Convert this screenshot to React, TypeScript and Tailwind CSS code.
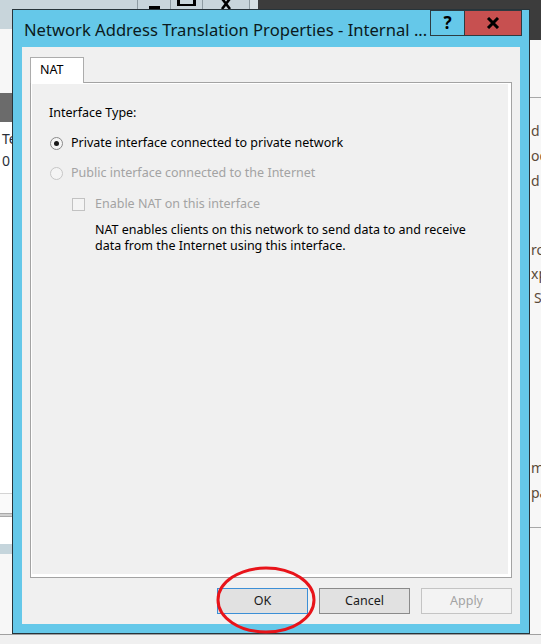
import React from "react";

const ui = { fontFamily: '"Noto Sans", "Open Sans", sans-serif' };

const Radio = ({ checked, disabled }: { checked?: boolean; disabled?: boolean }) => (
  <div
    className={`w-[13px] h-[13px] rounded-full border flex items-center justify-center ${
      disabled ? "border-[#c6c6c6] bg-[#f4f4f4]" : "border-[#8a8a8a] bg-[#f5f5f5]"
    }`}
  >
    {checked && <div className="w-[5px] h-[5px] rounded-full bg-[#1a1a1a]" />}
  </div>
);

const Background = () => (
  <div className="flex flex-col w-[541px] h-[644px] overflow-hidden">
    <div className="flex flex-1">
      {/* left app window */}
      <div className="w-[258px] shrink-0 flex flex-col">
        <div className="h-[29px] bg-[#c8d5db] flex justify-end">
          <div className="flex items-start h-[10px]">
            <div className="w-[34px] h-[10px] border-x border-[#8d9ba2] flex justify-center items-end">
              <div className="w-[11px] h-[3px] bg-black mb-px" />
            </div>
            <div className="w-[32px] h-[10px] border-r border-[#8d9ba2] flex justify-center">
              <div className="w-[19px] h-[6px] border-x-[3px] border-b-[2px] border-black" />
            </div>
            <div className="w-[47px] h-[10px] border-r border-[#8d9ba2] flex justify-center">
              <svg width="20" height="10" viewBox="0 0 20 10">
                <path d="M4 -4 L14 9 M16 -4 L6 9" stroke="#000" strokeWidth="2.6" />
              </svg>
            </div>
            <div className="w-[8px] h-[10px] bg-[#d6dfe3]" />
          </div>
        </div>
        <div className="h-[64px] bg-[#f7f7f7]" />
        <div className="h-[29px] bg-[#6b6b6b]" />
        <div className="flex-1 bg-white pt-[6px] pl-[2px] text-[14px] leading-[22px] text-[#2a2f3a]" style={ui}>
          <div>Te</div>
          <div>0</div>
        </div>
        <div className="h-[20px] bg-[#fafafa] border-t border-[#d4d4d4]" />
        <div className="h-[4px] border-y border-[#a9a9a9] bg-[#d0d0d0]" />
        <div className="h-[27px] bg-white" />
        <div className="h-[10px] bg-[#c5d5dc]" />
        <div className="h-[80px] bg-[#f7f7f7]" />
      </div>
      {/* right app window */}
      <div className="flex-1 min-w-0 overflow-hidden flex flex-col">
        <div className="h-[40px] bg-[#3c3c3c]" />
        <div className="flex-1 bg-[#f7f7f7] flex flex-col">
          <div className="h-[58px] border-b border-[#a8a8a8]" />
          <div
            className="pl-[273px] text-[14px] text-[#5b4a38] whitespace-nowrap flex flex-col"
            style={ui}
          >
            <div className="mt-[20px] leading-[25px]">d u</div>
            <div className="leading-[25px]">od</div>
            <div className="leading-[25px]">d t</div>
            <div className="mt-[45px] leading-[24px]">ro</div>
            <div className="leading-[24px]">xp</div>
            <div className="leading-[24px] pl-[3px]">S</div>
            <div className="mt-[145px] leading-[25px]">m</div>
            <div className="leading-[25px]">pa</div>
          </div>
          <div className="mt-[22px] border-t border-[#a8a8a8]" />
        </div>
      </div>
    </div>
    <div className="h-[10px] bg-[#f0f0f0] border-t border-[#a0a0a0]" />
  </div>
);

const Dialog = () => (
  <div className="absolute left-[12px] top-[9px] w-[518px] h-[625px] border border-[#27343a] bg-[#65c8e9] flex flex-col">
    <div className="h-[37px] flex items-start">
      <div className="flex-1 pl-[11px] pt-[8px] text-[16.6px] leading-[24px] text-[#0b1a20] whitespace-nowrap overflow-hidden" style={ui}>
        Network Address Translation Properties - Internal ...
      </div>
      <div className="flex mr-[7px]">
        <div className="w-[35px] h-[26px] border border-[#2d3b41] flex items-center justify-center font-bold text-[17px] text-black" style={ui}>
          ?
        </div>
        <div className="w-[57px] h-[26px] border border-l-0 border-[#2d3b41] bg-[#c75050] flex items-center justify-center">
          <svg width="14" height="12" viewBox="0 0 14 12">
            <path d="M2 1 L12 11 M12 1 L2 11" stroke="#000" strokeWidth="3" />
          </svg>
        </div>
      </div>
    </div>
    <div className="flex-1 mx-[9px] mb-[9px] bg-[#f0f0f0] flex flex-col px-[8px] pt-[10px] pb-[10px] text-[12.5px] text-black" style={ui}>
      <div className="flex">
        <div className="w-[54px] h-[26px] bg-white border border-b-0 border-[#acacac] pl-[9px] pt-[4px] leading-[16px] -mb-px relative">
          NAT
        </div>
      </div>
      <div className="flex-1 border border-[#a3a3a3] bg-[#f0f0f0] shadow-[inset_1px_1px_0_#ffffff,inset_-3px_-3px_0_#ffffff] pl-[18px] pt-[22px] leading-[16px]">
        <div>Interface Type:</div>
        <div className="mt-[14px] flex items-center">
          <div className="ml-px mr-[8px]">
            <Radio checked />
          </div>
          <span>Private interface connected to private network</span>
        </div>
        <div className="mt-[14px] flex items-center text-[#a3a3a3]">
          <div className="ml-px mr-[8px]">
            <Radio disabled />
          </div>
          <span>Public interface connected to the Internet</span>
        </div>
        <div className="mt-[15px] ml-[23px] flex items-center text-[#a3a3a3]">
          <div className="w-[13px] h-[13px] border border-[#c2c2c2] bg-[#f4f4f4] mr-[10px]" />
          <span>Enable NAT on this interface</span>
        </div>
        <div className="mt-[10px] ml-[46px]">
          NAT enables clients on this network to send data to and receive
          <br />
          data from the Internet using this interface.
        </div>
      </div>
      <div className="flex justify-end gap-[11px] mt-[10px]">
        <button className="w-[91px] h-[26px] border border-[#3c8fd6] bg-[#e1e1e1] text-[#1a1a1a]">OK</button>
        <button className="w-[91px] h-[26px] border border-[#8a8a8a] bg-[#e1e1e1] text-[#1a1a1a]">Cancel</button>
        <button className="w-[91px] h-[26px] border border-[#c4c4c4] bg-[#f3f3f3] text-[#a3a3a3]">Apply</button>
      </div>
    </div>
  </div>
);

export default function App() {
  return (
    <div className="relative w-[541px] h-[644px] overflow-hidden bg-[#f0f0f0]">
      <Background />
      <Dialog />
      <svg className="absolute left-[215px] top-[564px]" width="106" height="72" viewBox="0 0 106 72">
        <ellipse cx="51" cy="36" rx="48" ry="32" fill="none" stroke="#e8141a" strokeWidth="3" />
      </svg>
    </div>
  );
}
